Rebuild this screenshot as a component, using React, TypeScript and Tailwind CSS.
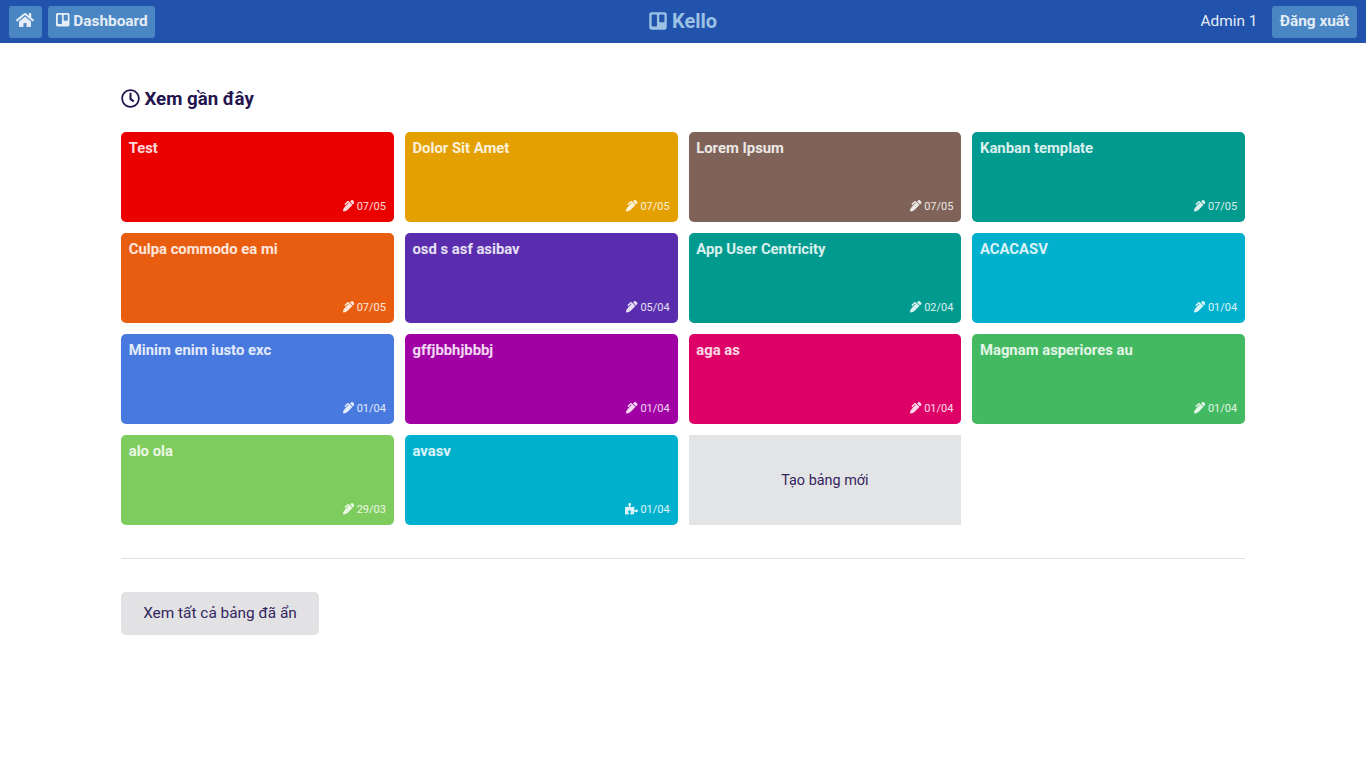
import { FaHome, FaTrello, FaRegClock, FaPenAlt, FaPuzzlePiece } from 'react-icons/fa';

type Board = { name: string; date: string; color: string; shared?: boolean };

const boards: Board[] = [
  { name: 'Test', date: '07/05', color: 'bg-[#eb0000]' },
  { name: 'Dolor Sit Amet', date: '07/05', color: 'bg-[#e4a000]' },
  { name: 'Lorem Ipsum', date: '07/05', color: 'bg-[#7f6358]' },
  { name: 'Kanban template', date: '07/05', color: 'bg-[#009a8e]' },
  { name: 'Culpa commodo ea mi', date: '07/05', color: 'bg-[#e85d0f]' },
  { name: 'osd s asf asibav', date: '05/04', color: 'bg-[#592dae]' },
  { name: 'App User Centricity', date: '02/04', color: 'bg-[#009a8e]' },
  { name: 'ACACASV', date: '01/04', color: 'bg-[#00b0cd]' },
  { name: 'Minim enim iusto exc', date: '01/04', color: 'bg-[#4879df]' },
  { name: 'gffjbbhjbbbj', date: '01/04', color: 'bg-[#a100a5]' },
  { name: 'aga as', date: '01/04', color: 'bg-[#dd0066]' },
  { name: 'Magnam asperiores au', date: '01/04', color: 'bg-[#43b961]' },
  { name: 'alo ola', date: '29/03', color: 'bg-[#7fcc5e]' },
  { name: 'avasv', date: '01/04', color: 'bg-[#00b0cd]', shared: true },
];

function Header() {
  return (
    <header className="grid h-[43px] grid-cols-3 items-center bg-[#2152ac] px-[9px] text-[15.4px] leading-[22px] text-[#e4edf6]">
      <div className="flex gap-1.5">
        <button className="flex h-8 w-[33px] items-center justify-center rounded-[3px] bg-[#4a85c4]">
          <FaHome className="mr-px mb-[3px] size-[18px]" />
        </button>
        <button className="flex h-8 w-[107px] items-center justify-center gap-[2.5px] rounded-[3px] bg-[#4a85c4] pb-0.5 font-bold">
          <FaTrello className="mb-px size-[15.5px]" />
          Dashboard
        </button>
      </div>
      <div className="flex items-center justify-center gap-1 pr-px pb-0.5 text-[20px] font-bold text-[#9bc1e4]">
        <FaTrello className="size-5" />
        Kello
      </div>
      <div className="flex items-center justify-end gap-[14.5px]">
        <span className="pb-0.5">Admin 1</span>
        <button className="h-8 w-[85px] rounded-[3px] bg-[#4a85c4] pb-0.5 font-bold">Đăng xuất</button>
      </div>
    </header>
  );
}

function BoardCard({ board }: { board: Board }) {
  return (
    <div className={`flex h-[90px] flex-col justify-between rounded-[5px] px-2 pt-[5px] pb-[7px] text-white/85 ${board.color}`}>
      <div className="-ml-[0.3px] text-[14.85px] leading-[22px] font-bold">{board.name}</div>
      <div className="-mr-[0.2px] flex items-center justify-end gap-[2.5px] text-[11px] leading-[17px]">
        {board.shared ? (
          <FaPuzzlePiece className="mb-px h-[11.5px] w-[13px]" />
        ) : (
          <FaPenAlt className="mb-px size-[11.5px]" />
        )}
        {board.date}
      </div>
    </div>
  );
}

export default function App() {
  return (
    <div className="min-h-screen bg-white font-['Roboto',sans-serif] text-[#25154f]">
      <Header />
      <main className="mx-auto w-[1124px] pt-11">
        <h1 className="flex h-[23px] items-center gap-[4.5px] text-[18.7px] leading-[23px] font-bold">
          <FaRegClock className="mb-px size-[19px]" />
          <span className="pt-0.5">Xem gần đây</span>
        </h1>
        <div className="mt-[22px] grid grid-cols-4 gap-[11px]">
          {boards.map((b) => (
            <BoardCard key={b.name} board={b} />
          ))}
          <button className="h-[90px] bg-[#e3e4e6] pt-0.5 text-[14.4px] text-[#33255f]">Tạo bảng mới</button>
        </div>
        <hr className="my-[33px] border-[#e0e0e2]" />
        <button className="h-[43px] w-[198px] rounded-[5px] bg-[#e2e2e4] text-[15.4px] text-[#33255f]">
          Xem tất cả bảng đã ẩn
        </button>
      </main>
    </div>
  );
}
